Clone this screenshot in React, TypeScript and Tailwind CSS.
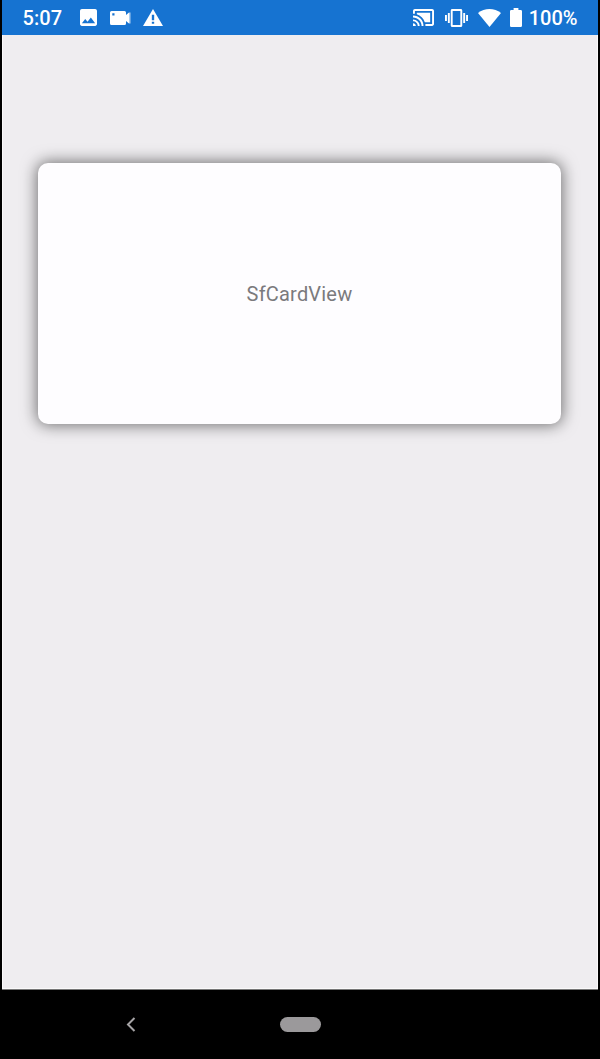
import React from "react";

function StatusBar() {
  return (
    <header className="flex h-[35px] shrink-0 items-center justify-between bg-[#1673d1] pr-[20.5px] pl-[20.5px] text-white">
      <div className="flex items-center">
        <span className="w-[57.5px] text-[20px] leading-6 font-medium tracking-[0.1px]">5:07</span>
        <svg className="mr-[13px] h-[17px] w-[17px]" viewBox="3 3 18 18" fill="currentColor">
          <path d="M21 19V5c0-1.100-.9-2-2-2H5c-1.100 0-2 .9-2 2v14c0 1.100.9 2 2 2h14c1.100 0 2-.9 2-2zM8.500 13.500l2.500 3.010L14.500 12l4.500 6H5l3.500-4.500z" />
        </svg>
        <svg className="mr-[12px] h-[14px] w-[21px]" viewBox="0 0 21 14" fill="currentColor">
          <path fillRule="evenodd" d="M1.500 0h13A1.500 1.500 0 0 1 16 1.500v11a1.500 1.500 0 0 1-1.500 1.500h-13A1.500 1.500 0 0 1 0 12.500v-11A1.500 1.500 0 0 1 1.500 0zM2.300 2.200v2.200h2.200V2.200z" />
          <path d="M16 4l3-2.500v11l-3-2.500z" />
          <path d="M19 1.500h1.500v11H19z" opacity=".65" />
        </svg>
        <svg className="h-[17px] w-[20px]" viewBox="1 2 22 19" preserveAspectRatio="none" fill="currentColor">
          <path fillRule="evenodd" d="M1 21h22L12 2zM10.700 16.200h2.600v2.300h-2.600zM10.700 8.500h2.600v6h-2.600z" />
        </svg>
      </div>
      <div className="flex items-center">
        <svg className="mr-[11px] h-[17px] w-[21px]" viewBox="1 3 22 18" preserveAspectRatio="none" fill="currentColor">
          <path d="M1 18v3h3c0-1.660-1.340-3-3-3zm0-4v2c2.760 0 5 2.240 5 5h2c0-3.870-3.130-7-7-7zm18-7H5v1.630c3.960 1.280 7.090 4.410 8.370 8.370H19V7zM1 10v2c4.970 0 9 4.030 9 9h2c0-6.080-4.930-11-11-11zm20-7H3c-1.100 0-2 .9-2 2v3h2V5h18v14h-7v2h7c1.100 0 2-.9 2-2V5c0-1.100-.9-2-2-2z" />
        </svg>
        <svg className="mr-[10px] h-[18px] w-[23px]" viewBox="0 3 24 18" preserveAspectRatio="none" fill="currentColor">
          <path d="M0 15h2V9H0v6zm3 2h2V7H3v10zm19-8v6h2V9h-2zm-3 8h2V7h-2v10zM16.500 3h-9C6.670 3 6 3.670 6 4.500v15c0 .83.67 1.500 1.500 1.500h9c.83 0 1.500-.67 1.500-1.500v-15c0-.83-.67-1.500-1.500-1.500zM16 19H8V5h8v14z" />
        </svg>
        <svg className="mr-[9px] h-[18px] w-[23px]" viewBox="0 0 23 18" fill="currentColor">
          <path d="M0 4C6.500-1.300 16.500-1.300 23 4L11.500 18z" />
        </svg>
        <svg className="mr-[6.500px] h-[19px] w-[12px]" viewBox="7 2 10 20" preserveAspectRatio="none" fill="currentColor">
          <path d="M15.670 4H14V2h-4v2H8.330C7.600 4 7 4.600 7 5.330v15.330C7 21.400 7.600 22 8.330 22h7.330c.74 0 1.340-.6 1.340-1.330V5.330C17 4.600 16.400 4 15.670 4z" />
        </svg>
        <span className="text-[20px] leading-6 font-medium">100%</span>
      </div>
    </header>
  );
}

function NavigationBar() {
  return (
    <nav className="grid h-[69px] shrink-0 grid-cols-3 items-center bg-black">
      <svg className="ml-[124px] h-[15px] w-[10px]" viewBox="0 0 10 15" fill="none" stroke="#a6a4a6" strokeWidth="2">
        <path d="M8.500 1L2 7.500L8.500 14" />
      </svg>
      <div className="ml-px h-[15px] w-[41px] justify-self-center rounded-full bg-[#9b999b]" />
    </nav>
  );
}

export default function App() {
  return (
    <div className="flex h-[1059px] w-[600px] flex-col bg-black px-[2px] font-['Roboto',sans-serif]">
      <StatusBar />
      <main className="flex-1 border border-t-0 border-[#faf9fa] bg-[#efedf0] px-[35px] pt-[128px]">
        <section className="flex h-[261px] w-[523px] items-center justify-center rounded-[10px] bg-[#fefdff] shadow-[0_0_16px_1px_rgba(0,0,0,0.55)]">
          <span className="text-[20px] leading-6 tracking-[0.2px] text-[#7b7a7d]">SfCardView</span>
        </section>
      </main>
      <div className="h-px bg-[#777]" />
      <NavigationBar />
    </div>
  );
}
